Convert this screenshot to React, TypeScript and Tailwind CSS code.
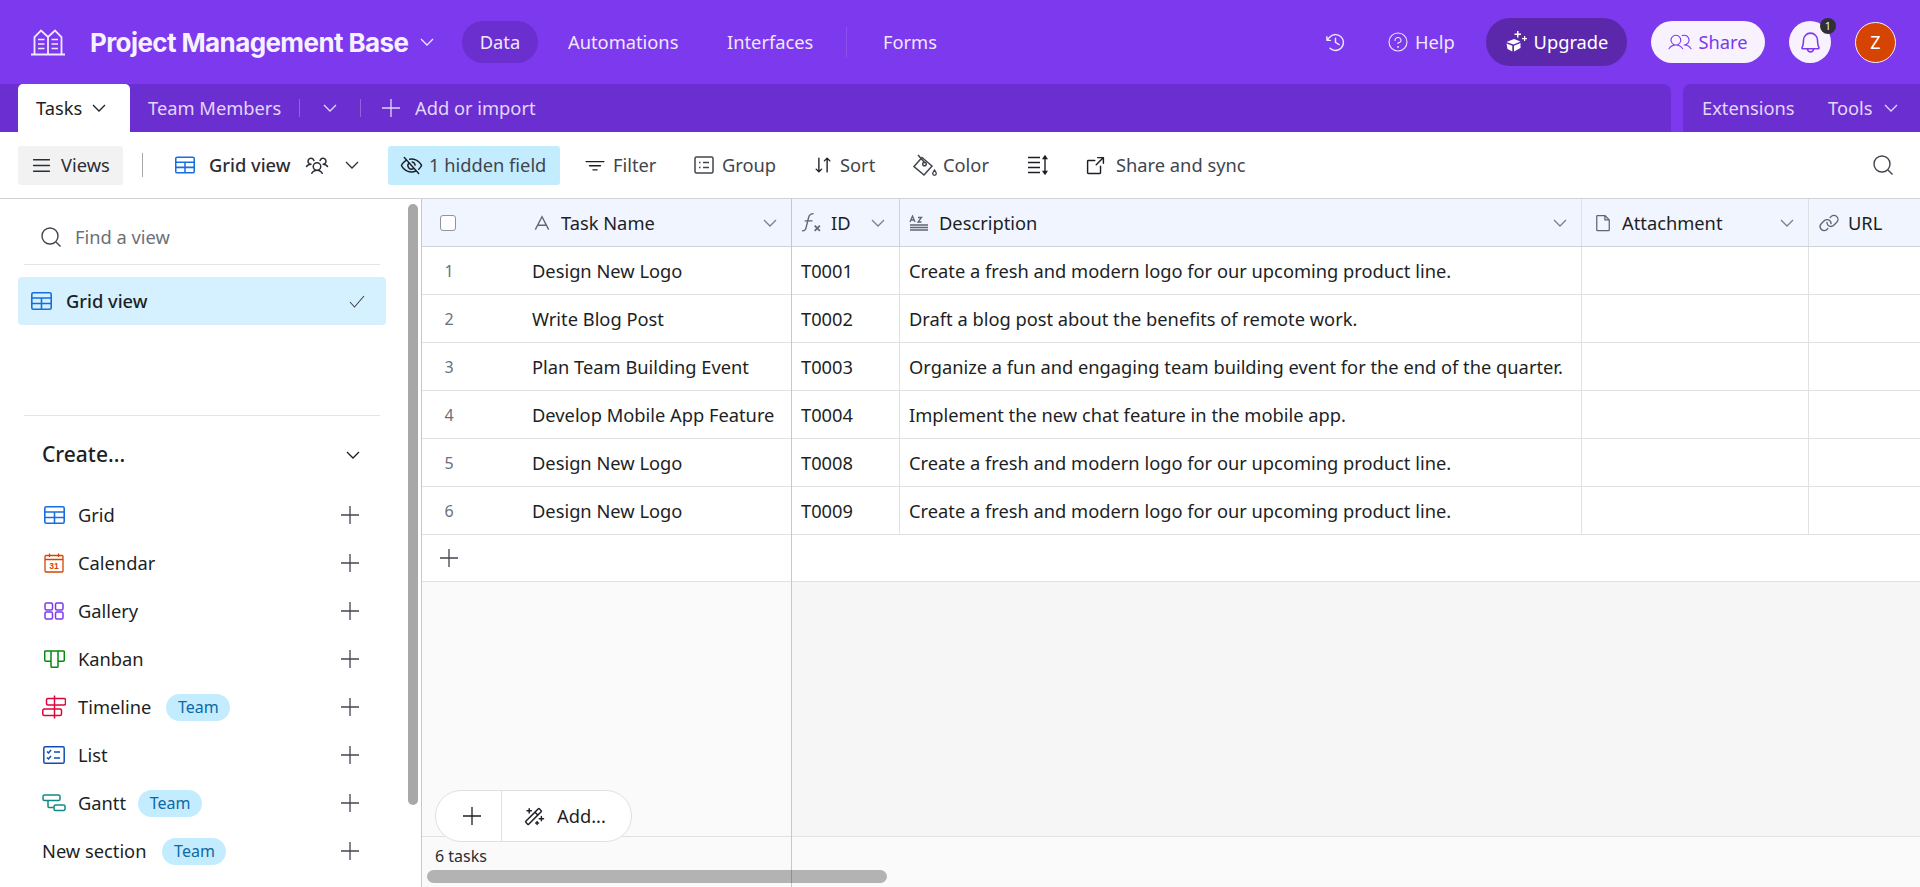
import React from "react";
import {
  PiArrowSquareOut,
  PiArrowsDownUp,
  PiBell,
  PiClockCounterClockwise,
  PiEyeSlash,
  PiFile,
  PiFunnelSimple,
  PiLink,
  PiList,
  PiMagicWand,
  PiQuestionLight,
  PiUsersLight,
  PiUsersThree,
} from "react-icons/pi";

const GridIcon = ({ className = "" }: { className?: string }) => (
  <svg viewBox="0 0 21 18" fill="none" stroke="currentColor" strokeWidth="1.6" className={className}>
    <rect x="0.8" y="0.8" width="19.4" height="16.4" rx="1.5" />
    <path d="M0.8 6h19.4M0.8 11.5h19.4M10.5 6v11" />
  </svg>
);

const Logo = () => (
  <svg viewBox="0 0 34 28" fill="none" stroke="#f1eafd" strokeWidth="1.8" className="w-[34px] h-[28px]">
    <path d="M0 26.500h34M3.500 26V9L10 2.500 17 9l7-6.500L30.500 9v17M17 9v17" />
    <path d="M7 11.500h6.500M7 16h6.500M7 20.500h6.500M20.500 11.500H27M20.500 16H27M20.500 20.500H27" strokeWidth="1.600" />
  </svg>
);

const UpgradeIcon = () => (
  <svg viewBox="0 0 24 24" fill="#fff" className="w-[24px] h-[24px]">
    <path d="M1.500 12l7.500-3 6.500 2.500-7 3z" />
    <path d="M1.500 13.500l5.800 2.200v5.800L2.500 19z" />
    <path d="M9 15.700l6.500-2.700v5l-6.500 3.500z" />
    <path d="M12 1h1.500v2.500H16V5h-2.500v2.500H12V5H9.500V3.500H12z" />
    <path d="M19 6h1.200v2H22v1.200h-1.800V11H19V9.200h-2V8h2z" />
  </svg>
);

const GroupIcon = () => (
  <svg viewBox="0 0 20 18" fill="none" stroke="currentColor" strokeWidth="1.5" className="w-[20px] h-[18px]">
    <rect x="1" y="1" width="18" height="16" rx="1.5" />
    <path d="M5 6.500h1.500M5 11.500h1.500M9 6.500h6M9 11.500h6" strokeWidth="1.6" />
  </svg>
);

const RowHeightIcon = () => (
  <svg viewBox="0 0 22 20" fill="none" stroke="currentColor" strokeWidth="1.4" className="w-[22px] h-[20px]">
    <path d="M1 2.500h12M1 7.500h12M1 12.500h12M1 17.500h12" />
    <path d="M18 3v14" />
    <path d="M16.300 3.500L18 1l1.700 2.500zM16.300 16.500L18 19l1.700-2.500z" fill="currentColor" />
  </svg>
);

const ColorIcon = () => (
  <svg viewBox="0 0 24 23" fill="none" stroke="currentColor" strokeWidth="1.500" className="w-[24px] h-[23px]">
    <path d="M9 3.500l10 8.500-8 9-10-8.500z" />
    <path d="M5 1l7 8" />
    <circle cx="11.500" cy="10" r="1.800" />
    <path d="M21.500 16c1.200 1.800 1.800 2.600 1.800 3.600a1.800 1.800 0 01-3.600 0c0-1 .6-1.800 1.800-3.600z" strokeWidth="1.300" />
  </svg>
);

const CalendarIcon = () => (
  <svg viewBox="0 0 20 20" fill="none" stroke="#d54402" strokeWidth="1.3" className="w-[20px] h-[20px]">
    <rect x="1" y="2.500" width="18" height="16.500" rx="1" />
    <path d="M1 6.500h18M5.500 0.500v3.500M14.500 0.500v3.500" />
    <text x="10" y="16" textAnchor="middle" fontSize="8.500" fontWeight="700" fill="#d54402" stroke="none" fontFamily="Liberation Sans, sans-serif">31</text>
  </svg>
);

const GalleryIcon = () => (
  <svg viewBox="0 0 20 18" fill="none" stroke="#7c39ed" strokeWidth="1.5" className="w-[20px] h-[18px]">
    <rect x="1" y="1" width="7.500" height="7" rx="1.500" />
    <rect x="11.500" y="1" width="7.500" height="7" rx="1.500" />
    <rect x="1" y="10" width="7.500" height="7" rx="1.500" />
    <rect x="11.500" y="10" width="7.500" height="7" rx="1.500" />
  </svg>
);

const KanbanIcon = () => (
  <svg viewBox="0 0 21 18" fill="none" stroke="#048a0e" strokeWidth="1.500" className="w-[21px] h-[18px]">
    <path d="M1.500 1h18a.8.8 0 01.8.800V10a1.200 1.200 0 01-1.200 1.200h-5.100M14 1v15.300a1 1 0 01-1 1H8a1 1 0 01-1-1V1M7 11.200H1.900A1.200 1.200 0 01.700 10V1.800a.8.800 0 01.800-.800" />
  </svg>
);

const TimelineIcon = () => (
  <svg viewBox="0 0 24 24" fill="none" stroke="#dc043b" strokeWidth="1.500" className="w-[24px] h-[24px]">
    <path d="M12.500 0.500v23" />
    <rect x="4.500" y="3.500" width="19" height="6.500" rx="1.500" />
    <rect x="0.800" y="14" width="18.700" height="6.500" rx="1.500" />
  </svg>
);

const ListIcon = () => (
  <svg viewBox="0 0 22 18" fill="none" stroke="#0f4fb5" strokeWidth="1.500" className="w-[22px] h-[18px]">
    <rect x="0.800" y="0.800" width="20.400" height="16.400" rx="1.500" />
    <path d="M4 5.500l1.500 1.500L8 4M4 11.500l1.500 1.500L8 10M11 6h6M11 12h6" />
  </svg>
);

const GanttIcon = () => (
  <svg viewBox="0 0 24 18" fill="none" stroke="#0f8a84" strokeWidth="1.500" className="w-[24px] h-[18px]">
    <rect x="1" y="1" width="17" height="5.500" rx="1.500" />
    <rect x="12" y="11" width="11" height="5.500" rx="1.500" />
    <path d="M6 6.500v6a1 1 0 001 1h5" />
  </svg>
);

const TextIcon = () => (
  <svg viewBox="0 0 18 16" fill="none" stroke="#616670" strokeWidth="1.500" className="w-[16px] h-[16px]">
    <path d="M1.500 15.500L9 1l7.500 14.500M4.500 10.500h9" />
  </svg>
);

const FxIcon = () => (
  <svg viewBox="0 0 20 20" fill="none" stroke="#616670" strokeWidth="1.300" className="w-[21px] h-[21px]">
    <path d="M1 18c3 0 3.500-1 4.200-4.500L7.300 5C8 2.500 9 1.500 12 1.500M3.500 8.500H11" />
    <path d="M13 13l5 5M18 13l-5 5" strokeWidth="1.600" />
  </svg>
);

const LongTextIcon = () => (
  <svg viewBox="0 0 20 16" fill="none" stroke="#616670" strokeWidth="1.300" className="w-[20px] h-[16px]">
    <path d="M1 7l2.500-6L6 7M2 5h3M9 2.500h3.500L9 7h3.500" />
    <path d="M1 10h18M1 12.500h18M1 15h18" />
  </svg>
);

const PlusMark = ({ className = "" }: { className?: string }) => (
  <svg viewBox="0 0 18 18" fill="none" stroke="currentColor" strokeWidth="1.300" className={`w-[18px] h-[18px] ${className}`}>
    <path d="M9 0v18M0 9h18" />
  </svg>
);

const Chevron = ({ className = "" }: { className?: string }) => (
  <svg viewBox="0 0 14 8" fill="none" stroke="currentColor" strokeWidth="1.300" className={`w-[14px] h-[8px] ${className}`}>
    <path d="M1 1l6 6 6-6" />
  </svg>
);

const SearchMark = ({ className = "" }: { className?: string }) => (
  <svg viewBox="0 0 20 20" fill="none" stroke="currentColor" strokeWidth="1.400" className={`w-[20px] h-[20px] ${className}`}>
    <circle cx="9" cy="9" r="8" />
    <path d="M15 15l4.500 4.500" />
  </svg>
);

const Team = () => (
  <span className="flex items-center justify-center w-[64px] h-[27px] rounded-full bg-[#c4ecff] text-[#0f68a2] text-[16px]">Team</span>
);

const TopLink = ({ w, children }: { w: string; children: React.ReactNode }) => (
  <div className={`${w} flex items-center text-[#efe7fd] text-[18.3px]`}>{children}</div>
);

const ToolButton = ({ w, gap = "gap-[9px]", icon, label }: { w: string; gap?: string; icon: React.ReactNode; label: string }) => (
  <div className={`${w} flex items-center ${gap} text-[#41454d] text-[18.3px]`}>
    {icon}
    <span>{label}</span>
  </div>
);

const createItems: { icon: React.ReactNode; label: string; labelGap: string; team?: boolean }[] = [
  { icon: <GridIcon className="w-[21px] h-[18px] text-[#166ee1]" />, label: "Grid", labelGap: "mr-[11px]" },
  { icon: <CalendarIcon />, label: "Calendar", labelGap: "mr-[11px]" },
  { icon: <GalleryIcon />, label: "Gallery", labelGap: "mr-[11px]" },
  { icon: <KanbanIcon />, label: "Kanban", labelGap: "mr-[11px]" },
  { icon: <TimelineIcon />, label: "Timeline", labelGap: "mr-[15px]", team: true },
  { icon: <ListIcon />, label: "List", labelGap: "mr-[11px]" },
  { icon: <GanttIcon />, label: "Gantt", labelGap: "mr-[12px]", team: true },
];

const rows = [
  ["1", "Design New Logo", "T0001", "Create a fresh and modern logo for our upcoming product line."],
  ["2", "Write Blog Post", "T0002", "Draft a blog post about the benefits of remote work."],
  ["3", "Plan Team Building Event", "T0003", "Organize a fun and engaging team building event for the end of the quarter."],
  ["4", "Develop Mobile App Feature", "T0004", "Implement the new chat feature in the mobile app."],
  ["5", "Design New Logo", "T0008", "Create a fresh and modern logo for our upcoming product line."],
  ["6", "Design New Logo", "T0009", "Create a fresh and modern logo for our upcoming product line."],
];

const Caret = () => <Chevron className="text-[#7b8087]" />;

export default function App() {
  return (
    <div className="w-[1920px] h-[887px] overflow-hidden flex flex-col bg-white text-[#1d1f25] font-['Noto_Sans','Open_Sans',sans-serif]">
      {/* Top bar */}
      <header className="h-[84px] shrink-0 bg-[#7c39ed] flex items-center pl-[31px]">
        <Logo />
        <div className="ml-[25px] text-[26px] font-bold text-[#f6f1fe] font-['Inter',sans-serif] tracking-[-0.6px] w-[318px] whitespace-nowrap">Project Management Base</div>
        <Chevron className="ml-[12px] text-[#efe7fd]" />
        <div className="ml-[28px] w-[76px] h-[42px] rounded-full bg-[#6a2fce] flex items-center justify-center text-[#efe7fd] text-[18.3px]">Data</div>
        <TopLink w="ml-[30px] w-[159px]">Automations</TopLink>
        <TopLink w="w-[119px]">Interfaces</TopLink>
        <div className="w-px h-[30px] bg-[#8c50ef]" />
        <TopLink w="ml-[36px] w-[441px]">Forms</TopLink>
        <PiClockCounterClockwise size={23} className="text-[#efe7fd]" />
        <PiQuestionLight size={24} className="ml-[39px] text-[#efe7fd]" />
        <TopLink w="ml-[5px] w-[71px]">Help</TopLink>
        <div className="w-[141px] h-[48px] rounded-full bg-[#5b28ab] flex items-center justify-center gap-[5px] text-white text-[18.3px]">
          <UpgradeIcon />
          Upgrade
        </div>
        <div className="ml-[24px] w-[114px] h-[42px] rounded-full bg-[#f7f2fe] flex items-center justify-center gap-[6px] text-[#7c39ed] text-[18.3px]">
          <PiUsersLight size={24} />
          Share
        </div>
        <div className="relative ml-[24px] w-[42px] h-[42px] rounded-full bg-[#f7f2fe] flex items-center justify-center text-[#7c39ed]">
          <PiBell size={25} />
          <span className="absolute -top-[3px] -right-[5px] w-[16px] h-[16px] rounded-full bg-[#2f3136] text-[#f2f2f2] text-[11px] leading-[16px] text-center">1</span>
        </div>
        <div className="ml-[24px] w-[41px] h-[41px] rounded-full bg-[#d54402] border border-[#f7f2fe] flex items-center justify-center text-white text-[18px]">Z</div>
      </header>

      {/* Table tabs */}
      <div className="h-[48px] shrink-0 bg-[#7c39ed] flex">
        <div className="w-[1671px] bg-[#6b2fd1] rounded-tr-[8px] flex items-center pl-[18px]">
          <div className="w-[112px] h-[48px] bg-white rounded-t-[5px] flex items-center pl-[18px] gap-[10px] text-[18.3px]">
            Tasks
            <Chevron className="text-[#1d1f25]" />
          </div>
          <div className="ml-[18px] w-[151px] text-[18.3px] text-[#e3d6fb]">Team Members</div>
          <div className="w-px h-[18px] bg-[#8f63dd]" />
          <Chevron className="ml-[23px] text-[#e3d6fb]" />
          <div className="ml-[23px] w-px h-[18px] bg-[#8f63dd]" />
          <PlusMark className="ml-[21px] text-[#e3d6fb]" />
          <div className="ml-[15px] text-[18.3px] text-[#e3d6fb]">Add or import</div>
        </div>
        <div className="ml-[12px] w-[237px] bg-[#6b2fd1] rounded-tl-[8px] flex items-center pl-[19px] text-[18.3px] text-[#e3d6fb]">
          <div className="w-[126px]">Extensions</div>
          <div className="w-[56px]">Tools</div>
          <Chevron />
        </div>
      </div>

      {/* View toolbar */}
      <div className="h-[67px] shrink-0 flex items-center pl-[18px] border-b border-[#cfd2d6]">
        <div className="w-[105px] h-[39px] rounded-[3px] bg-[#f2f2f2] flex items-center pl-[12px] gap-[8px] text-[18.3px] text-[#2b2e34]">
          <PiList size={23} />
          Views
        </div>
        <div className="ml-[19px] w-px h-[24px] bg-[#a8a8a8]" />
        <GridIcon className="ml-[32px] w-[20px] h-[18px] text-[#166ee1]" />
        <div className="ml-[14px] w-[96px] text-[18.3px] font-medium text-[#2b2e34] whitespace-nowrap">Grid view</div>
        <PiUsersThree size={24} className="text-[#2b2e34]" />
        <Chevron className="ml-[16px] text-[#2b2e34]" />
        <div className="ml-[29px] w-[172px] h-[39px] rounded-[3px] bg-[#c4ecff] flex items-center pl-[12px] gap-[6px] text-[18.3px] text-[#41454d]">
          <PiEyeSlash size={23} className="text-[#1d1f25]" />
          1 hidden field
        </div>
        <ToolButton w="ml-[24px] w-[110px]" gap="gap-[7px]" icon={<PiFunnelSimple size={22} className="text-[#1d1f25]" />} label="Filter" />
        <ToolButton w="w-[121px]" gap="gap-[8px]" icon={<GroupIcon />} label="Group" />
        <ToolButton w="w-[98px]" gap="gap-[6px]" icon={<PiArrowsDownUp size={22} className="-ml-[3px] text-[#1d1f25]" />} label="Sort" />
        <ToolButton w="w-[114px]" gap="gap-[6px]" icon={<ColorIcon />} label="Color" />
        <div className="w-[57px] text-[#1d1f25]"><RowHeightIcon /></div>
        <ToolButton w="w-[789px]" icon={<PiArrowSquareOut size={23} className="text-[#1d1f25]" />} label="Share and sync" />
        <SearchMark className="text-[#41454d]" />
      </div>

      {/* Body */}
      <div className="flex-1 flex min-h-0">
        {/* Views sidebar */}
        <aside className="relative w-[422px] shrink-0 border-r border-[#c8c8c8] pt-[10px]">
          <div className="ml-[24px] mr-[41px] h-[56px] pl-[17px] flex items-center gap-[14px] border-b border-[#e5e5e5] text-[18.3px] text-[#6b7079]">
            <SearchMark className="text-[#41454d]" />
            Find a view
          </div>
          <div className="mt-[12px] ml-[18px] w-[368px] h-[48px] rounded-[4px] bg-[#d5f1ff] flex items-center pl-[13px] text-[18.3px] font-medium">
            <GridIcon className="w-[21px] h-[18px] text-[#166ee1]" />
            <span className="ml-[14px] flex-1">Grid view</span>
            <svg viewBox="0 0 16 13" fill="none" stroke="#41454d" strokeWidth="1.100" className="mr-[21px] w-[16px] h-[13px]">
              <path d="M1 7l4.500 5L15 1" />
            </svg>
          </div>
          <div className="mt-[90px] ml-[24px] mr-[41px] h-px bg-[#e5e5e5]" />
          <div className="mt-[15px] pl-[42px] pr-[61px] h-[48px] flex items-center justify-between text-[21px] font-medium">
            Create...
            <Chevron />
          </div>
          <div className="mt-[12px] pl-[42px] pr-[62px]">
            {createItems.map((item) => (
              <div key={item.label} className="h-[48px] flex items-center text-[18.3px]">
                <span className="w-[24px] h-[24px] flex items-center justify-center">{item.icon}</span>
                <span className={`ml-[12px] ${item.labelGap}`}>{item.label}</span>
                {item.team && <Team />}
                <PlusMark className="ml-auto text-[#41454d]" />
              </div>
            ))}
            <div className="h-[48px] flex items-center text-[18.3px]">
              <span className="mr-[16px]">New section</span>
              <Team />
              <PlusMark className="ml-auto text-[#41454d]" />
            </div>
          </div>
          <div className="absolute left-[408px] top-[5px] w-[10px] h-[601px] rounded-full bg-[#a8a8a8]" />
        </aside>

        {/* Frozen column */}
        <section className="relative w-[370px] shrink-0 flex flex-col border-r border-[#c8c8c8] bg-[#fafafa]">
          <div className="h-[48px] shrink-0 flex items-center bg-[#f0f5ff] border-b border-[#cfd2d6] pl-[18px] pr-[14px]">
            <span className="w-[16px] h-[16px] rounded-[3px] border border-[#8f949c] bg-white" />
            <span className="ml-[78px] mr-[11px]"><TextIcon /></span>
            <span className="flex-1 text-[18.3px]">Task Name</span>
            <Caret />
          </div>
          {rows.map((r) => (
            <div key={r[0]} className="h-[48px] shrink-0 flex items-center bg-white border-b border-[#e1e1e1] text-[18.3px]">
              <span className="w-[54px] text-center text-[16px] text-[#6b7079]">{r[0]}</span>
              <span className="ml-[56px] whitespace-nowrap">{r[1]}</span>
            </div>
          ))}
          <div className="h-[47px] shrink-0 flex items-center bg-white border-b border-[#e1e1e1] pl-[18px]">
            <PlusMark className="text-[#41454d]" />
          </div>
          <div className="flex-1 border-b border-[#e1e1e1]" />
          <div className="h-[50px] shrink-0 pl-[13px] pt-[7px] text-[16px] text-[#2b2e34]">6 tasks</div>
          <div className="absolute left-[13px] bottom-[45px] w-[197px] h-[52px] rounded-full bg-white border border-[#e1e1e1] flex items-center">
            <div className="w-[66px] h-full pl-[6px] flex items-center justify-center border-r border-[#e1e1e1]">
              <PlusMark className="text-[#1d1f25]" />
            </div>
            <PiMagicWand size={23} className="ml-[20px] text-[#1d1f25]" />
            <span className="ml-[12px] text-[18.3px]">Add...</span>
          </div>
        </section>

        {/* Scrolling columns */}
        <section className="relative flex-1 min-w-0 flex flex-col bg-[#f6f6f6] overflow-hidden">
          <div className="h-[48px] shrink-0 flex items-center bg-[#f0f5ff] border-b border-[#cfd2d6]">
            <div className="w-[108px] h-full shrink-0 flex items-center pl-[9px] pr-[14px] border-r border-[#cfd2d6]">
              <FxIcon />
              <span className="ml-[9px] flex-1 text-[18.3px]">ID</span>
              <Caret />
            </div>
            <div className="w-[682px] h-full shrink-0 flex items-center pl-[9px] pr-[14px] border-r border-[#dcdfe3]">
              <LongTextIcon />
              <span className="ml-[10px] flex-1 text-[18.3px]">Description</span>
              <Caret />
            </div>
            <div className="w-[227px] h-full shrink-0 flex items-center pl-[11px] pr-[14px] border-r border-[#dcdfe3]">
              <PiFile size={20} className="text-[#616670]" />
              <span className="ml-[9px] flex-1 text-[18.3px]">Attachment</span>
              <Caret />
            </div>
            <div className="flex-1 flex items-center pl-[9px]">
              <PiLink size={22} className="text-[#616670]" />
              <span className="ml-[8px] text-[18.3px]">URL</span>
            </div>
          </div>
          {rows.map((r) => (
            <div key={r[0]} className="h-[48px] shrink-0 flex bg-white border-b border-[#e1e1e1] text-[18.3px]">
              <div className="w-[108px] shrink-0 flex items-center pl-[9px] border-r border-[#e1e1e1]">{r[2]}</div>
              <div className="w-[682px] shrink-0 flex items-center pl-[9px] border-r border-[#e1e1e1] whitespace-nowrap">{r[3]}</div>
              <div className="w-[227px] shrink-0 border-r border-[#e1e1e1]" />
            </div>
          ))}
          <div className="h-[47px] shrink-0 bg-white border-b border-[#e1e1e1]" />
          <div className="flex-1 border-b border-[#e1e1e1]" />
          <div className="h-[50px] shrink-0 bg-[#fafafa]" />
        </section>
        <div className="absolute left-[427px] top-[870px] w-[460px] h-[13px] rounded-full bg-[#00000048]" />
      </div>
    </div>
  );
}
